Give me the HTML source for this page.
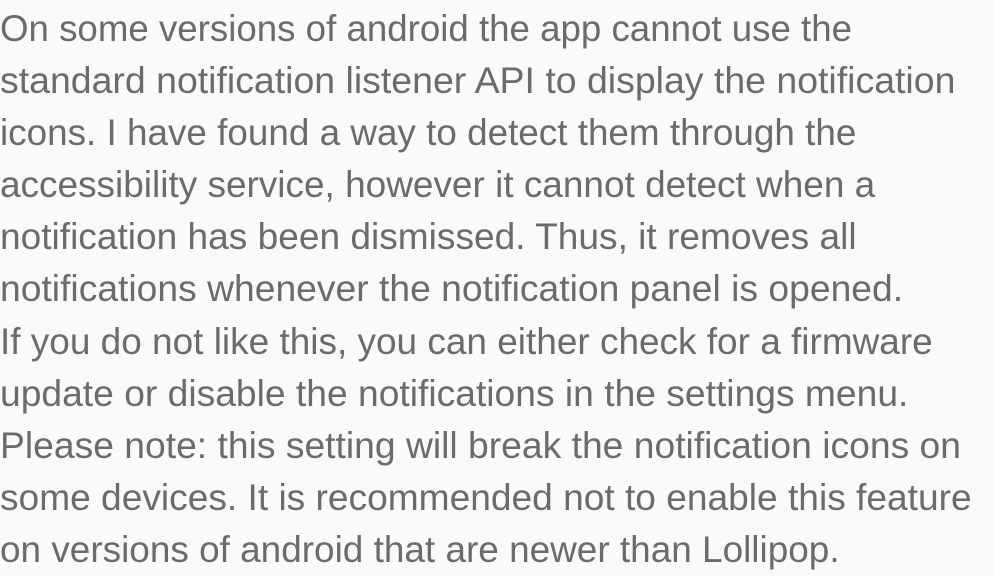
<!DOCTYPE html>
<html><head><meta charset="utf-8"><style>
html,body{margin:0;padding:0;background:#fafafa;width:994px;height:572px;overflow:hidden}
.t{font-family:"Liberation Sans",sans-serif;font-size:37px;color:#6b6b6b;position:absolute;left:0;top:3px}
.t div{height:52.1px;line-height:52.1px;white-space:nowrap;transform-origin:left center}
</style></head><body><div class="t">
<div style="transform:scaleX(0.991)">On some versions of android the app cannot use the</div>
<div style="transform:scaleX(1.012)">standard notification listener API to display the notification</div>
<div style="transform:scaleX(0.996)">icons. I have found a way to detect them through the</div>
<div style="transform:scaleX(0.999)">accessibility service, however it cannot detect when a</div>
<div style="transform:scaleX(1.002)">notification has been dismissed. Thus, it removes all</div>
<div style="transform:scaleX(1.007)">notifications whenever the notification panel is opened.</div>
<div style="transform:scaleX(0.999)">If you do not like this, you can either check for a firmware</div>
<div style="transform:scaleX(1.006)">update or disable the notifications in the settings menu.</div>
<div style="transform:scaleX(1.007)">Please note: this setting will break the notification icons on</div>
<div style="transform:scaleX(1.003)">some devices. It is recommended not to enable this feature</div>
<div style="transform:scaleX(0.998)">on versions of android that are newer than Lollipop.</div>
</div></body></html>
